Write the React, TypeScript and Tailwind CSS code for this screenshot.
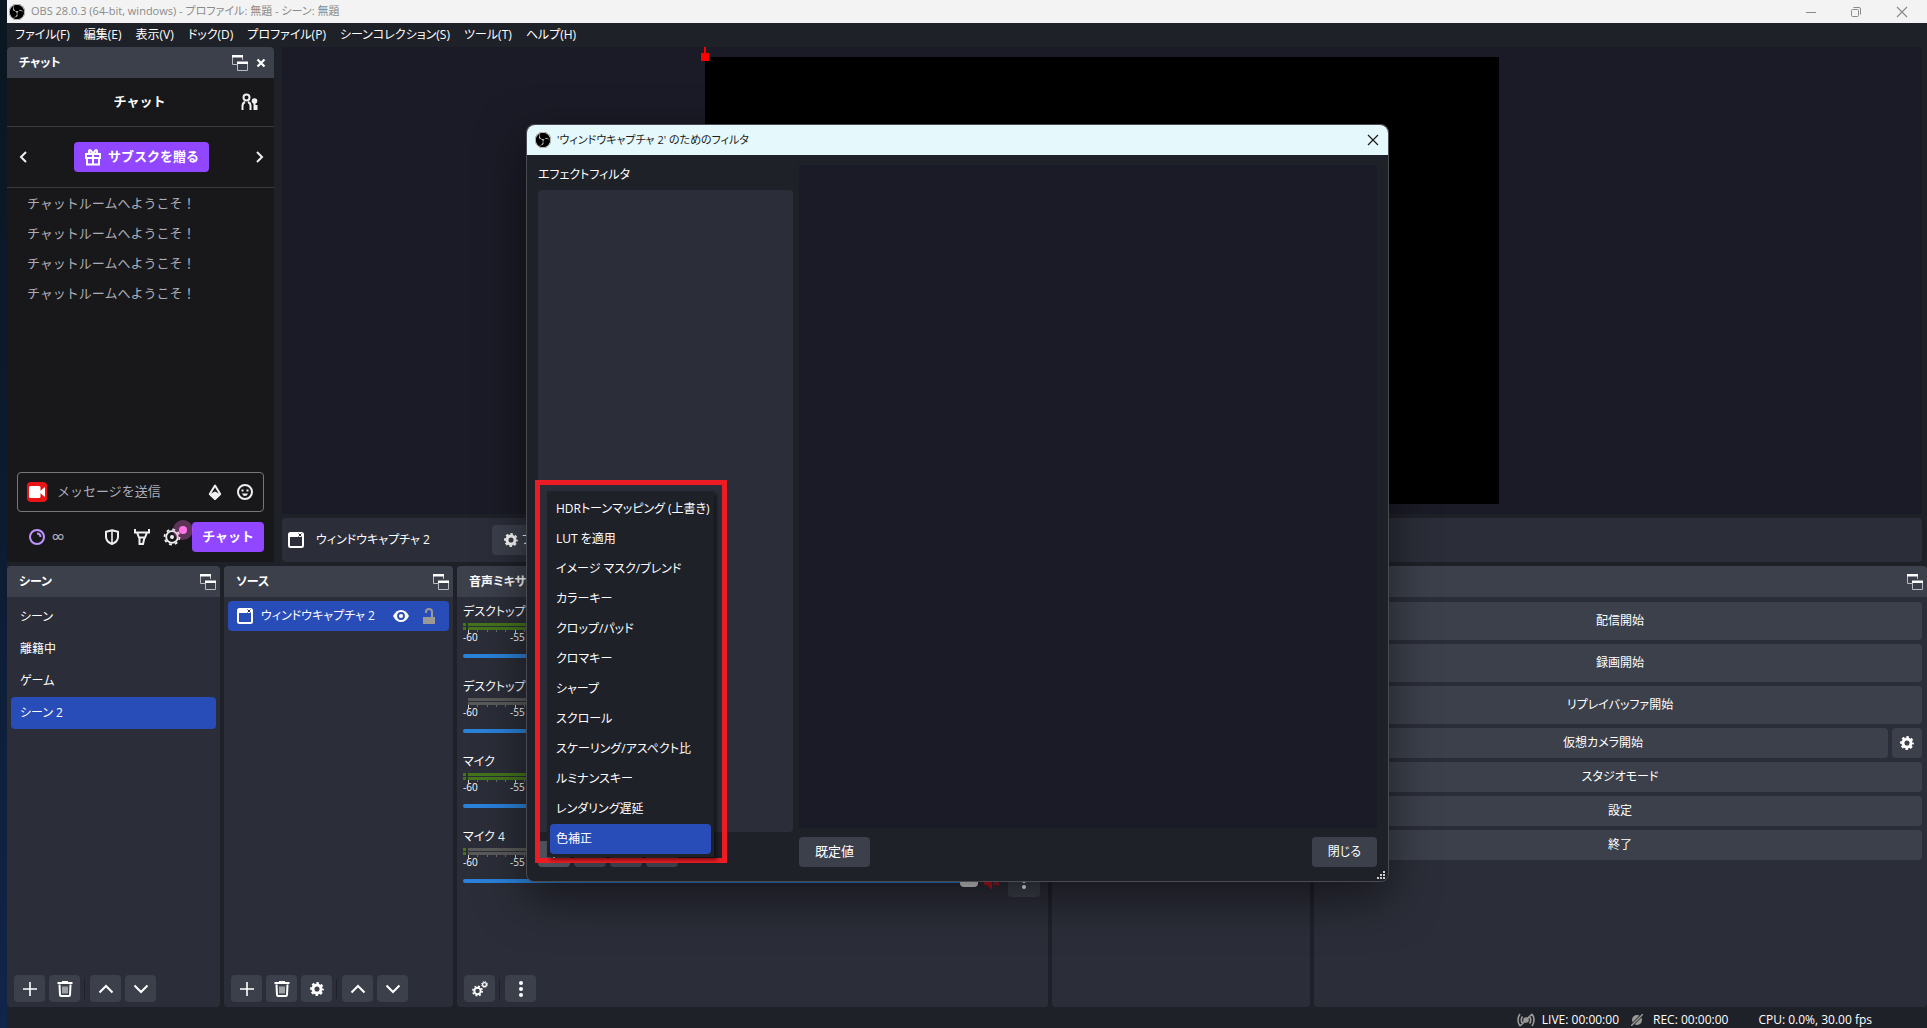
import { useState, type ReactNode } from 'react'
import { clsx } from 'clsx'
import { SiObsstudio } from 'react-icons/si'

const UI_FONT = "font-['Open_Sans','Noto_Sans_CJK_JP',sans-serif]"
const CHAT_FONT = "font-['Inter','Noto_Sans_CJK_JP',sans-serif]"

const menus = ['ファイル(F)', '編集(E)', '表示(V)', 'ドック(D)', 'プロファイル(P)', 'シーンコレクション(S)', 'ツール(T)', 'ヘルプ(H)']
const scenes = ['シーン', '離籍中', 'ゲーム', 'シーン 2']
const filters = [
  'HDRトーンマッピング (上書き)',
  'LUT を適用',
  'イメージ マスク/ブレンド',
  'カラーキー',
  'クロップ/パッド',
  'クロマキー',
  'シャープ',
  'スクロール',
  'スケーリング/アスペクト比',
  'ルミナンスキー',
  'レンダリング遅延',
  '色補正',
]
const channels = [
  { id: 1, name: 'デスクトップ音声', peak: true, active: true },
  { id: 2, name: 'デスクトップ音声', peak: false, active: false },
  { id: 3, name: 'マイク', peak: true, active: true },
  { id: 4, name: 'マイク 4', peak: true, active: false },
]

/* ---------- icons ---------- */

function ObsLogo() {
  return (
    <span className="flex size-4 shrink-0 items-center justify-center rounded-full bg-black text-[#e4e4e4]">
      <SiObsstudio className="size-4" aria-hidden="true" />
    </span>
  )
}

function PopOutIcon() {
  return (
    <svg viewBox="0 0 16 16" className="size-4" aria-hidden="true">
      <path d="M.5 1v8.500h5M10.500 5V1" fill="none" stroke="#b9bbc1" />
      <path d="M0 0h11v2.500H0z" fill="#fff" />
      <path d="M5.500 8.500v7h10v-7" fill="none" stroke="#b9bbc1" />
      <path d="M5 6.500h11V9H5z" fill="#fff" />
    </svg>
  )
}

function GearIcon({ className }: { className?: string }) {
  return (
    <svg viewBox="0 0 16 16" className={className} aria-hidden="true">
      <circle cx="8" cy="8" r="4.600" fill="none" stroke="#fff" strokeWidth="3.400" />
      <circle cx="8" cy="8" r="6.800" fill="none" stroke="#fff" strokeWidth="2.200" strokeDasharray="2.900 2.440" strokeDashoffset="1.450" />
    </svg>
  )
}

function PlusIcon() {
  return (
    <svg viewBox="0 0 14 14" className="size-3.5" aria-hidden="true">
      <path d="M7 0v14M0 7h14" stroke="#fff" strokeWidth="1.600" />
    </svg>
  )
}

function TrashIcon() {
  return (
    <svg viewBox="0 0 16 16" className="size-4" fill="none" stroke="#fff" aria-hidden="true">
      <path d="M.5 2h15" strokeWidth="2" />
      <path d="M5 .5h6" />
      <path d="M2.500 3.500l.5 10.500q.1 1 1 1h8q.9 0 1-1l.5-10.500" strokeWidth="2" />
      <path d="M6 5.500v7M8 5.500v7M10 5.500v7" />
    </svg>
  )
}

function ChevronIcon({ down }: { down?: boolean }) {
  return (
    <svg viewBox="0 0 16 10" className={clsx('h-2.5 w-4', down && 'rotate-180')} aria-hidden="true">
      <path d="M1.500 8.500L8 2l6.500 6.500" fill="none" stroke="#fff" strokeWidth="2" />
    </svg>
  )
}

function DotsIcon() {
  return (
    <svg viewBox="0 0 4 16" className="h-4 w-1" fill="#fff" aria-hidden="true">
      <circle cx="2" cy="2" r="2" />
      <circle cx="2" cy="8" r="2" />
      <circle cx="2" cy="14" r="2" />
    </svg>
  )
}

function WindowIcon() {
  return (
    <svg viewBox="0 0 16 16" className="size-4 shrink-0" aria-hidden="true">
      <rect x="1" y="1" width="14" height="14" rx="1.500" fill="none" stroke="#fff" strokeWidth="2" />
      <path d="M1 1h14v4H1z" fill="#fff" />
      <path d="M10.500 1.500l3 3M13.500 1.500l-3 3" stroke="#2b2d38" />
    </svg>
  )
}

function CloseGlyph({ className }: { className?: string }) {
  return (
    <svg viewBox="0 0 12 12" className={className} aria-hidden="true">
      <path d="M1 1l10 10M11 1L1 11" fill="none" stroke="currentColor" strokeWidth="1.200" />
    </svg>
  )
}

/* ---------- shared pieces ---------- */

function DockHeader({ title, children }: { title?: string; children?: ReactNode }) {
  return (
    <header className="flex h-[31px] shrink-0 items-center justify-end gap-2 rounded-t bg-[#3c404b] pr-1 pl-3">
      {title && <h2 className="flex-1 text-xs font-semibold whitespace-nowrap">{title}</h2>}
      <button type="button" aria-label="フロート">
        <PopOutIcon />
      </button>
      {children}
    </header>
  )
}

function ToolButton({ label, children }: { label: string; children: ReactNode }) {
  return (
    <button type="button" aria-label={label} className="flex h-[27px] w-[31px] items-center justify-center rounded bg-[#3c404b] hover:bg-[#4a4e5a]">
      {children}
    </button>
  )
}

function Separator() {
  return <span className="mr-px h-5 w-px bg-[#1f2129]" />
}

function WideButton({ children, tall }: { children: ReactNode; tall?: boolean }) {
  return (
    <button type="button" className={clsx('flex-1 rounded bg-[#3c404b] hover:bg-[#4a4e5a]', tall ? 'min-h-[38px]' : 'min-h-[30px]')}>
      {children}
    </button>
  )
}

/* ---------- chat ---------- */

function ChatDock() {
  return (
    <section className="flex w-[267px] shrink-0 flex-col bg-[#18181b]">
      <DockHeader title="チャット">
        <button type="button" aria-label="閉じる" className="mr-1">
          <svg viewBox="0 0 10 10" className="size-2.5" aria-hidden="true">
            <path d="M1.500 1.500l7 7M8.500 1.500l-7 7" stroke="#fff" strokeWidth="2.200" />
          </svg>
        </button>
      </DockHeader>
      <div className={clsx('flex flex-1 flex-col text-[13px] [font-feature-settings:normal]', CHAT_FONT)}>
        <div className="flex h-[49px] items-center border-b border-[#3a3a3d] pr-4 pl-8">
          <h3 className="flex-1 text-center font-semibold">チャット</h3>
          <button type="button" aria-label="ユーザー">
            <svg viewBox="0 0 18 18" className="size-[18px]" fill="none" stroke="#efeff1" strokeWidth="2" aria-hidden="true">
              <circle cx="6.500" cy="4.500" r="3" />
              <path d="M2.500 17v-4q0-3 2.500-4M10.500 17v-4q0-3-2.500-4" />
              <circle cx="14.500" cy="8" r="2.800" fill="#efeff1" stroke="none" />
              <path d="M13.500 9h2v3h2v5h-4z" fill="#efeff1" stroke="none" />
            </svg>
          </button>
        </div>
        <div className="flex h-[61px] items-center justify-between border-b border-[#3a3a3d] pr-2.5 pl-3">
          <button type="button" aria-label="前へ">
            <svg viewBox="0 0 8 12" className="h-3 w-2" aria-hidden="true"><path d="M7 1L2 6l5 5" fill="none" stroke="#efeff1" strokeWidth="2" /></svg>
          </button>
          <button type="button" className="flex h-[30px] items-center gap-1.5 rounded bg-[#9147ff] px-2.5 font-bold">
            <svg viewBox="0 0 18 18" className="size-[18px]" fill="none" stroke="#fff" strokeWidth="2" aria-hidden="true">
              <path d="M2 6h14v4H2zM3 10h12v6.500H3zM9 6v10.500M9 6Q4 6 5 3t4 3q3-6 4-3t-4 3" />
            </svg>
            サブスクを贈る
          </button>
          <button type="button" aria-label="次へ">
            <svg viewBox="0 0 8 12" className="h-3 w-2" aria-hidden="true"><path d="M1 1l5 5-5 5" fill="none" stroke="#efeff1" strokeWidth="2" /></svg>
          </button>
        </div>
        <ul className="flex-1 text-[#adadb8]">
          {[0, 1, 2, 3].map((n) => (
            <li key={n} className="h-[30px] pl-5 leading-[30px]">チャットルームへようこそ！</li>
          ))}
        </ul>
        <form className="px-2.5 pb-2.5" onSubmit={(e) => e.preventDefault()}>
          <div className="flex h-10 items-center gap-2.5 rounded border border-[#75757c] px-[9px]">
            <span className="flex h-5 w-5 shrink-0 items-center justify-center rounded bg-[#eb1414]">
              <svg viewBox="0 0 16 12" className="h-3 w-4" fill="#fff" aria-hidden="true">
                <rect width="11.500" height="12" rx="1.500" />
                <path d="M11 5l5-4v10l-5-4z" />
              </svg>
            </span>
            <input aria-label="メッセージ" placeholder="メッセージを送信" className="min-w-0 flex-1 bg-transparent outline-none placeholder:text-[#adadb8]" />
            <button type="button" aria-label="ビッツ" className="mr-1">
              <svg viewBox="0 0 14 18" className="h-[18px] w-3.5" aria-hidden="true">
                <path d="M7 2.500L1.800 11 7 16l5.200-5z" fill="none" stroke="#efeff1" strokeWidth="2" strokeLinejoin="round" />
                <path d="M1 11.500L7 8.500l6 3L7 17z" fill="#efeff1" />
              </svg>
            </button>
            <button type="button" aria-label="エモート">
              <svg viewBox="0 0 18 18" className="size-[18px]" aria-hidden="true">
                <circle cx="9" cy="9" r="7" fill="none" stroke="#efeff1" strokeWidth="2" />
                <path d="M5.500 6.500h2v2h-2zM10.500 6.500h2v2h-2zM6 10.500h6q-1 2.500-3 2.500t-3-2.500z" fill="#efeff1" />
              </svg>
            </button>
          </div>
          <div className="mt-2.5 flex h-[30px] items-center">
            <svg viewBox="0 0 18 18" className="ml-[11px] size-[18px]" fill="none" stroke="#bf94ff" strokeWidth="2" aria-hidden="true">
              <circle cx="9" cy="9" r="7" />
              <path d="M9 5.500q3.500 0 3.500 3.500" />
            </svg>
            <span className="ml-1.5 flex-1 text-[#adadb8]">∞</span>
            <div className="flex items-center gap-3 pr-[11px]">
              <button type="button" aria-label="モデレーション">
                <svg viewBox="0 0 18 18" className="size-[18px]" aria-hidden="true">
                  <path d="M9 2.200l6 1.500v5.300q0 4.500-6 7-6-2.500-6-7V3.700z" fill="none" stroke="#efeff1" strokeWidth="2" />
                  <path d="M9 2v14" stroke="#efeff1" strokeWidth="1.600" />
                </svg>
              </button>
              <button type="button" aria-label="モデレーターツール">
                <svg viewBox="0 0 18 18" className="size-[18px]" fill="none" stroke="#efeff1" strokeWidth="2" aria-hidden="true">
                  <path d="M2 1v3.500h14V1M4 4.500l2 5h6l2-5M6.500 9.500V16h3.500l1.500-6.500" />
                </svg>
              </button>
              <button type="button" aria-label="チャット設定" className="relative">
                <svg viewBox="0 0 18 18" className="size-[18px]" fill="none" stroke="#efeff1" aria-hidden="true">
                  <circle cx="9" cy="9" r="5.800" strokeWidth="1.800" />
                  <circle cx="9" cy="9" r="7.500" strokeWidth="1.800" strokeDasharray="2.900 2.990" />
                  <circle cx="9" cy="9" r="2" fill="#efeff1" stroke="none" />
                </svg>
                <span className="absolute -top-2 left-2.5 flex size-5 items-center justify-center rounded-full bg-[#ff75e6]/30">
                  <span className="size-2 rounded-full bg-[#ff75e6]" />
                </span>
              </button>
            </div>
            <button type="submit" className="h-[30px] rounded bg-[#9147ff] px-2.5 font-bold whitespace-nowrap">チャット</button>
          </div>
        </form>
      </div>
    </section>
  )
}

/* ---------- docks ---------- */

function ScenesDock() {
  const [selected, setSelected] = useState('シーン 2')
  return (
    <section className="flex w-[213px] shrink-0 flex-col rounded bg-[#2b2d38]">
      <DockHeader title="シーン" />
      <ul className="flex-1 p-1">
        {scenes.map((s) => (
          <li key={s}>
            <button
              type="button"
              onClick={() => setSelected(s)}
              className={clsx('h-8 w-full rounded pl-[9px] text-left', s === selected && 'bg-[#284cb8]')}
            >
              {s}
            </button>
          </li>
        ))}
      </ul>
      <div className="flex items-center gap-1 px-[7px] pb-[5px]">
        <ToolButton label="追加"><PlusIcon /></ToolButton>
        <ToolButton label="削除"><TrashIcon /></ToolButton>
        <Separator />
        <ToolButton label="上へ"><ChevronIcon /></ToolButton>
        <ToolButton label="下へ"><ChevronIcon down /></ToolButton>
      </div>
    </section>
  )
}

function SourcesDock() {
  return (
    <section className="flex w-[229px] shrink-0 flex-col rounded bg-[#2b2d38]">
      <DockHeader title="ソース" />
      <ul className="flex-1 p-1">
        <li className="flex h-[30px] items-center gap-2 rounded bg-[#284cb8] pr-3.5 pl-[9px]">
          <WindowIcon />
          <span className="min-w-0 flex-1 whitespace-nowrap">ウィンドウキャプチャ 2</span>
          <button type="button" aria-label="表示" className="mr-1.5">
            <svg viewBox="0 0 16 12" className="h-3 w-4" aria-hidden="true">
              <path d="M0 6q3-6 8-6t8 6q-3 6-8 6T0 6z" fill="#fff" />
              <circle cx="8" cy="6" r="3" fill="none" stroke="#284cb8" strokeWidth="1.800" />
            </svg>
          </button>
          <button type="button" aria-label="ロック">
            <svg viewBox="0 0 12 16" className="h-4 w-3" aria-hidden="true">
              <path d="M0 9h12v7H0z" fill="#9a9996" />
              <path d="M3 5V4q0-3 3-3t3 3v5" fill="none" stroke="#9a9996" strokeWidth="2" />
            </svg>
          </button>
        </li>
      </ul>
      <div className="flex items-center gap-1 px-[7px] pb-[5px]">
        <ToolButton label="追加"><PlusIcon /></ToolButton>
        <ToolButton label="削除"><TrashIcon /></ToolButton>
        <ToolButton label="プロパティ"><GearIcon className="size-3.5" /></ToolButton>
        <Separator />
        <ToolButton label="上へ"><ChevronIcon /></ToolButton>
        <ToolButton label="下へ"><ChevronIcon down /></ToolButton>
      </div>
    </section>
  )
}

function Meter({ peak, active }: { peak: boolean; active: boolean }) {
  const marks = [-60, -55, -50, -45, -40, -35, -30, -25, -20, -15, -10, -5]
  return (
    <div>
      {[0, 1].map((row) => (
        <div key={row} className="mb-px flex h-[3px] gap-0.5">
          <span className={clsx('w-[3px]', peak && 'bg-[#44751b]')} />
          <span className={clsx('flex-1', active ? 'bg-[#44751b]' : 'bg-[#5a5a5a]')} />
        </div>
      ))}
      <div className="flex h-3 text-[10px] leading-3">
        {marks.map((m) => (
          <span key={m} className="relative w-[47px] shrink-0">
            <span className="absolute -top-px left-[5px] h-1 w-px bg-[#d0d0d0]" />
            {[14, 24, 33, 42].map((x) => (
              <span key={x} className="absolute -top-px h-0.5 w-px bg-[#6b6d75]" style={{ left: x }} />
            ))}
            {m}
          </span>
        ))}
      </div>
    </div>
  )
}

function MixerDock() {
  return (
    <section className="flex w-[591px] shrink-0 flex-col rounded bg-[#2b2d38]">
      <DockHeader title="音声ミキサー" />
      <ul className="flex-1 px-1.5 pt-1.5">
        {channels.map((c) => (
          <li key={c.id} className="h-[75px]">
            <p className="h-5 leading-[18px]">{c.name}</p>
            <Meter peak={c.peak} active={c.active} />
            <div className="flex h-[26px] items-center">
              <div className="relative h-1 flex-1 rounded bg-[#2a82da]">
                <input type="range" defaultValue={100} aria-label={`${c.name} 音量`} className="absolute inset-0 h-1 w-full opacity-0" />
                <span className="absolute -top-1 right-0 h-3 w-[18px] rounded-sm bg-[#d8d8d8]" />
              </div>
              <button type="button" aria-label="ミュート" className="mr-2 ml-1.5">
                <svg viewBox="0 0 16 16" className="size-4" aria-hidden="true">
                  <path d="M0 5h3l5-4v16l-5-5H0z" fill="#b8141f" />
                  <path d="M10 6l5 6M15 6l-5 6" stroke="#b8141f" strokeWidth="2" />
                </svg>
              </button>
              <button type="button" aria-label="オプション" className="mr-0.5 flex size-8 items-center justify-center rounded bg-[#3c404b]"><DotsIcon /></button>
            </div>
          </li>
        ))}
      </ul>
      <div className="flex items-center gap-1 px-[7px] pb-[5px]">
        <ToolButton label="オーディオの詳細プロパティ">
          <svg viewBox="0 0 16 16" className="size-4" fill="none" stroke="#fff" aria-hidden="true">
            <circle cx="5.500" cy="10" r="3.200" strokeWidth="2" />
            <circle cx="5.500" cy="10" r="4.800" strokeWidth="1.400" strokeDasharray="1.900 1.870" />
            <circle cx="12.500" cy="3.500" r="1.900" strokeWidth="1.300" />
            <circle cx="12.500" cy="3.500" r="3" strokeWidth="1" strokeDasharray="1.200 1.156" />
          </svg>
        </ToolButton>
        <Separator />
        <ToolButton label="メニュー"><DotsIcon /></ToolButton>
      </div>
    </section>
  )
}

function ControlsDock() {
  return (
    <section aria-label="コントロール" className="flex min-w-0 flex-1 flex-col rounded bg-[#2b2d38]">
      <DockHeader />
      <div className="flex flex-col gap-1 pt-[5px] pr-[5px] pl-1">
        <WideButton tall>配信開始</WideButton>
        <WideButton tall>録画開始</WideButton>
        <WideButton tall>リプレイバッファ開始</WideButton>
        <div className="flex gap-1">
          <WideButton>仮想カメラ開始</WideButton>
          <button type="button" aria-label="仮想カメラ設定" className="flex w-[30px] items-center justify-center rounded bg-[#3c404b]">
            <GearIcon className="size-3.5" />
          </button>
        </div>
        <WideButton>スタジオモード</WideButton>
        <WideButton>設定</WideButton>
        <WideButton>終了</WideButton>
      </div>
    </section>
  )
}

/* ---------- filter dialog ---------- */

function FilterMenu() {
  const [current, setCurrent] = useState(filters.length - 1)
  return (
    <div className="absolute top-[355px] left-2 border-[5px] border-[#ed1c24] pt-1.5 pr-2 pb-px pl-[7px]">
      <div role="menu" className="w-[167px] bg-[#1f2129] p-[3px] shadow-[3px_3px_4px_rgba(0,0,0,0.5)]">
        {filters.map((f, i) => (
          <button
            key={f}
            type="button"
            role="menuitem"
            onMouseEnter={() => setCurrent(i)}
            className={clsx('block h-[30px] w-full rounded pl-1.5 text-left whitespace-nowrap', i === current && 'bg-[#284cb8]')}
          >
            {f}
          </button>
        ))}
      </div>
    </div>
  )
}

function FilterDialog() {
  return (
    <div
      role="dialog"
      aria-label="フィルタ"
      className="absolute top-[124px] left-[526px] flex h-[758px] w-[863px] flex-col rounded-lg border border-[#4a4b50] bg-[#1f2129] shadow-[0_16px_48px_rgba(0,0,0,0.5)]"
    >
      <header className="flex h-[30px] shrink-0 items-center rounded-t-lg bg-[#e5f8fb] px-2 text-[11px] text-[#1b1b1b]">
        <ObsLogo />
        <h2 className="ml-1.5 flex-1 whitespace-nowrap">&apos;ウィンドウキャプチャ 2&apos; のためのフィルタ</h2>
        <button type="button" aria-label="閉じる" className="mr-px"><CloseGlyph className="size-3" /></button>
      </header>
      <div className="flex min-h-0 flex-1 gap-1.5 px-[11px] pt-2.5 pb-3.5">
        <div className="flex w-[255px] flex-col">
          <h3 className="h-[25px] leading-5">エフェクトフィルタ</h3>
          <div className="flex-1 rounded bg-[#2b2d38]" />
          <div className="flex gap-1 pt-[9px]">
            <button type="button" aria-label="フィルタを追加" className="flex h-[26px] w-8 items-center justify-center rounded bg-[#4d515c]"><PlusIcon /></button>
            <button type="button" aria-label="フィルタを削除" className="flex h-[26px] w-8 items-center justify-center rounded bg-[#3c404b]" />
            <button type="button" aria-label="上へ" className="flex h-[26px] w-8 items-center justify-center rounded bg-[#3c404b]" />
            <button type="button" aria-label="下へ" className="flex h-[26px] w-8 items-center justify-center rounded bg-[#3c404b]" />
          </div>
        </div>
        <div className="flex flex-1 flex-col gap-[9px]">
          <div className="flex-1 bg-[#1a1b26]" />
          <div className="flex justify-between">
            <button type="button" className="h-[30px] rounded bg-[#3c404b] px-4 text-[13px]">既定値</button>
            <button type="button" className="h-[30px] rounded bg-[#3c404b] px-4">閉じる</button>
          </div>
        </div>
      </div>
      <svg viewBox="0 0 8 8" className="absolute right-[3px] bottom-0.5 size-2" fill="#d0d0d0" aria-hidden="true">
        <path d="M6 0h2v2H6zM3 3h2v2H3zM6 3h2v2H6zM0 6h2v2H0zM3 6h2v2H3zM6 6h2v2H6z" />
      </svg>
      <FilterMenu />
    </div>
  )
}

/* ---------- app ---------- */

export default function App() {
  return (
    <div className={clsx("relative flex min-h-screen overflow-hidden bg-[#1f2129] text-xs text-white [font-feature-settings:'palt']", UI_FONT)}>
      <div className="w-[7px] shrink-0 bg-linear-to-b from-[#0a1620] via-[#0c1b30] to-[#10254a]" />
      <div className="flex min-w-0 flex-1 flex-col">
        <header className="flex h-[23px] shrink-0 items-center bg-[#f3f3f3] pr-[19px] pl-0.5 text-[11px] text-[#8a8a8a]">
          <ObsLogo />
          <h1 className="ml-1.5 flex-1">OBS 28.0.3 (64-bit, windows) - プロファイル: 無題 - シーン: 無題</h1>
          <div className="flex items-center gap-[35px]">
            <button type="button" aria-label="最小化"><svg viewBox="0 0 10 10" className="size-2.5" aria-hidden="true"><path d="M0 5.500h10" stroke="currentColor" /></svg></button>
            <button type="button" aria-label="元に戻す">
              <svg viewBox="0 0 10 10" className="size-2.5" fill="none" stroke="currentColor" aria-hidden="true">
                <rect x=".5" y="2.500" width="7" height="7" rx="1" />
                <path d="M2.500.5H8q1.500 0 1.500 1.500v5.500" />
              </svg>
            </button>
            <button type="button" aria-label="閉じる"><CloseGlyph className="size-3" /></button>
          </div>
        </header>
        <nav className="flex h-6 shrink-0 items-center gap-3.5 px-2">
          {menus.map((m) => (
            <button key={m} type="button" className="whitespace-nowrap">{m}</button>
          ))}
        </nav>

        <div className="flex h-[515px] shrink-0 gap-2">
          <ChatDock />
          <main className="flex min-w-0 flex-1 flex-col gap-1 pr-[5px]">
            <div className="flex flex-1 justify-center bg-[#1a1b26] pt-2.5">
              <div className="relative h-[447px] w-[794px] bg-black">
                <span className="absolute -top-2.5 -left-px h-2 w-0.5 bg-[#ff0000]" />
                <span className="absolute -top-1 -left-1 size-2 bg-[#ff0000]" />
              </div>
            </div>
            <div className="flex h-11 items-center rounded bg-[#2b2d38] px-1.5">
              <WindowIcon />
              <span className="ml-3 w-44">ウィンドウキャプチャ 2</span>
              <button type="button" className="flex h-[30px] items-center gap-1 rounded bg-[#3c404b] px-3">
                <GearIcon className="size-3.5" />
                フィルタ
              </button>
            </div>
          </main>
        </div>

        <div className="mt-1 flex min-h-[441px] flex-1 gap-1">
          <ScenesDock />
          <SourcesDock />
          <MixerDock />
          <section aria-label="シーントランジション" className="flex w-[258px] shrink-0 flex-col rounded bg-[#2b2d38]">
            <DockHeader />
          </section>
          <ControlsDock />
        </div>

        <footer className="flex h-[21px] shrink-0 items-center justify-end pt-1 pr-[55px]">
          <svg viewBox="0 0 20 14" className="mr-1.5 h-3.5 w-5" fill="none" stroke="#9a9996" strokeWidth="1.600" aria-hidden="true">
            <path d="M4 1q-4 6 0 12M6.500 3.500q-2.500 3.500 0 7M16 1q4 6 0 12M13.500 3.500q2.500 3.500 0 7M4 13L16 1" />
            <circle cx="10" cy="7" r="2" fill="#9a9996" />
          </svg>
          <span>LIVE: 00:00:00</span>
          <svg viewBox="0 0 12 12" className="mr-2.5 ml-3 size-3" aria-hidden="true">
            <circle cx="6" cy="6" r="5" fill="#9a9996" />
            <path d="M0 12L12 0" stroke="#1f2129" strokeWidth="3" />
            <path d="M0 12L12 0" stroke="#9a9996" strokeWidth="1.400" />
          </svg>
          <span>REC: 00:00:00</span>
          <span className="ml-[30px]">CPU: 0.0%, 30.00 fps</span>
        </footer>
      </div>
      <FilterDialog />
    </div>
  )
}
